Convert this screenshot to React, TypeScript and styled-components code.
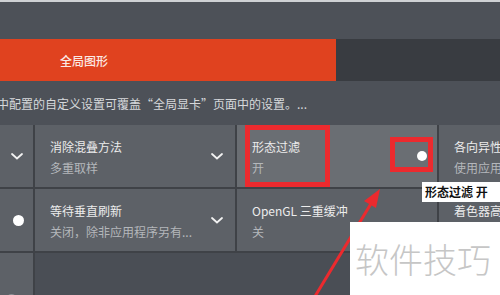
import { FunctionComponent } from 'react';
import styled, { createGlobalStyle } from 'styled-components';

const GlobalStyle = createGlobalStyle`
  html, body {
    margin: 0;
    padding: 0;
    background: #4d5158;
    overflow: hidden;
  }
  * {
    box-sizing: border-box;
  }
`;

type Tone = 'base' | 'active' | 'empty';

type Setting = {
  title?: string;
  value?: string;
  trailing?: 'chevron' | 'dot' | 'fadedDot' | 'knob';
  tone?: Tone;
  span?: number;
};

const rows: Setting[][] = [
  [
    { trailing: 'chevron' },
    { title: '消除混叠方法', value: '多重取样', trailing: 'chevron' },
    { title: '形态过滤', value: '开', trailing: 'knob', tone: 'active' },
    { title: '各向异性过滤', value: '使用应用程序设置' },
  ],
  [
    { trailing: 'dot' },
    { title: '等待垂直刷新', value: '关闭，除非应用程序另有...', trailing: 'chevron' },
    { title: 'OpenGL 三重缓冲', value: '关' },
    { title: '着色器高速缓存', value: '开' },
  ],
  [{ trailing: 'fadedDot' }, { tone: 'empty', span: 3 }],
];

const Chevron: FunctionComponent = () => (
  <svg width="12" height="7" viewBox="0 0 12 7">
    <path d="M1 1l5 4.5L11 1" fill="none" stroke="#f2f2f2" strokeWidth="1.8" strokeLinecap="round" />
  </svg>
);

export default function App() {
  return (
    <Page>
      <GlobalStyle />
      <TopLine />
      <Header />
      <TabBar>
        <ActiveTab>全局图形</ActiveTab>
        <TabRest />
      </TabBar>
      <Description>中配置的自定义设置可覆盖“全局显卡”页面中的设置。...</Description>
      <Grid>
        {rows.flat().map((s, i) => (
          <Cell key={i} $tone={s.tone ?? 'base'} $span={s.span ?? 1}>
            {s.title && (
              <Texts>
                <Title>{s.title}</Title>
                <Value>{s.value}</Value>
              </Texts>
            )}
            {s.trailing === 'chevron' && <Chevron />}
            {s.trailing === 'dot' && <Dot />}
            {s.trailing === 'fadedDot' && <FadedDot />}
            {s.trailing === 'knob' && <Knob />}
          </Cell>
        ))}
      </Grid>

      <RedBox style={{ left: 245, top: 125, width: 85, height: 62 }} />
      <RedBox style={{ left: 390, top: 137, width: 43, height: 35 }} />
      <Tooltip>形态过滤 开</Tooltip>
      <Arrow width="500" height="295" viewBox="0 0 500 295">
        <line x1="314" y1="298" x2="372" y2="202" stroke="#ec2a2e" strokeWidth="3" />
        <polygon points="380,189 364,201 376,208" fill="#ec2a2e" />
      </Arrow>
      <Watermark>软件技巧</Watermark>
    </Page>
  );
}

const Page = styled.div`
  position: relative;
  width: 500px;
  height: 295px;
  overflow: hidden;
  display: flex;
  flex-direction: column;
  background: #4d5158;
  font-family: 'Noto Sans CJK SC', 'Noto Sans', sans-serif;
`;

const TopLine = styled.div`
  flex-shrink: 0;
  height: 2px;
  background: #cfd1d4;
`;

const Header = styled.div`
  flex-shrink: 0;
  height: 37px;
  background: #4d5158;
`;

const TabBar = styled.div`
  flex-shrink: 0;
  display: flex;
  height: 42px;
`;

const ActiveTab = styled.div`
  width: 336px;
  background: #e0421f;
  color: #fbe9e4;
  font-size: 12px;
  font-weight: 500;
  display: flex;
  align-items: center;
  padding-left: 60px;
`;

const TabRest = styled.div`
  flex: 1;
  background: #393c41;
`;

const Description = styled.div`
  flex-shrink: 0;
  height: 44px;
  display: flex;
  align-items: center;
  margin-left: -3px;
  font-size: 12px;
  color: #d6d8db;
  white-space: nowrap;
`;

const Grid = styled.div`
  flex: 1;
  min-height: 0;
  overflow: hidden;
  display: grid;
  grid-template-columns: 33px 200px 200px 1fr;
  grid-auto-rows: 62px;
  gap: 2px;
  background: #3f4247;
`;

const toneColor: Record<Tone, string> = {
  base: '#5d6167',
  active: '#6a6e73',
  empty: '#4a4e55',
};

const Cell = styled.div<{ $tone: Tone; $span: number }>`
  grid-column: span ${(p) => p.$span};
  background: ${(p) => toneColor[p.$tone]};
  display: flex;
  align-items: center;
  justify-content: space-between;
  padding: 0 12px 0 15px;
  overflow: hidden;

  &:first-child,
  &:nth-child(5),
  &:nth-child(9) {
    padding: 0;
    justify-content: center;
  }
`;

const Texts = styled.div`
  display: flex;
  flex-direction: column;
  gap: 4px;
  white-space: nowrap;
  margin-top: 1px;
`;

const Title = styled.div`
  font-size: 12px;
  line-height: 17px;
  color: #ececec;
`;

const Value = styled.div`
  font-size: 12px;
  line-height: 17px;
  color: #b4b7bb;
`;

const Dot = styled.div`
  width: 11px;
  height: 11px;
  border-radius: 50%;
  background: #ffffff;
  margin-left: 3px;
`;

const FadedDot = styled.div`
  width: 11px;
  height: 11px;
  border-radius: 50%;
  background: #8c9095;
  margin: 30px 10px 0 0;
`;

const Knob = styled.div`
  width: 10px;
  height: 10px;
  border-radius: 50%;
  background: #ffffff;
  margin-right: -2px;
`;

const RedBox = styled.div`
  position: absolute;
  border: 5px solid #ec2a2e;
`;

const Tooltip = styled.div`
  position: absolute;
  left: 422px;
  top: 182px;
  width: 80px;
  height: 20px;
  padding-left: 3px;
  background: #ffffff;
  color: #111;
  font-size: 12px;
  font-weight: 700;
  line-height: 20px;
  white-space: nowrap;
`;

const Arrow = styled.svg`
  position: absolute;
  left: 0;
  top: 0;
  pointer-events: none;
`;

const Watermark = styled.div`
  position: absolute;
  left: 350px;
  top: 222px;
  width: 150px;
  height: 73px;
  background: #ffffff;
  color: #c6c6c6;
  font-size: 34px;
  font-weight: 300;
  display: flex;
  align-items: center;
  padding-left: 5px;
  white-space: nowrap;
`;
